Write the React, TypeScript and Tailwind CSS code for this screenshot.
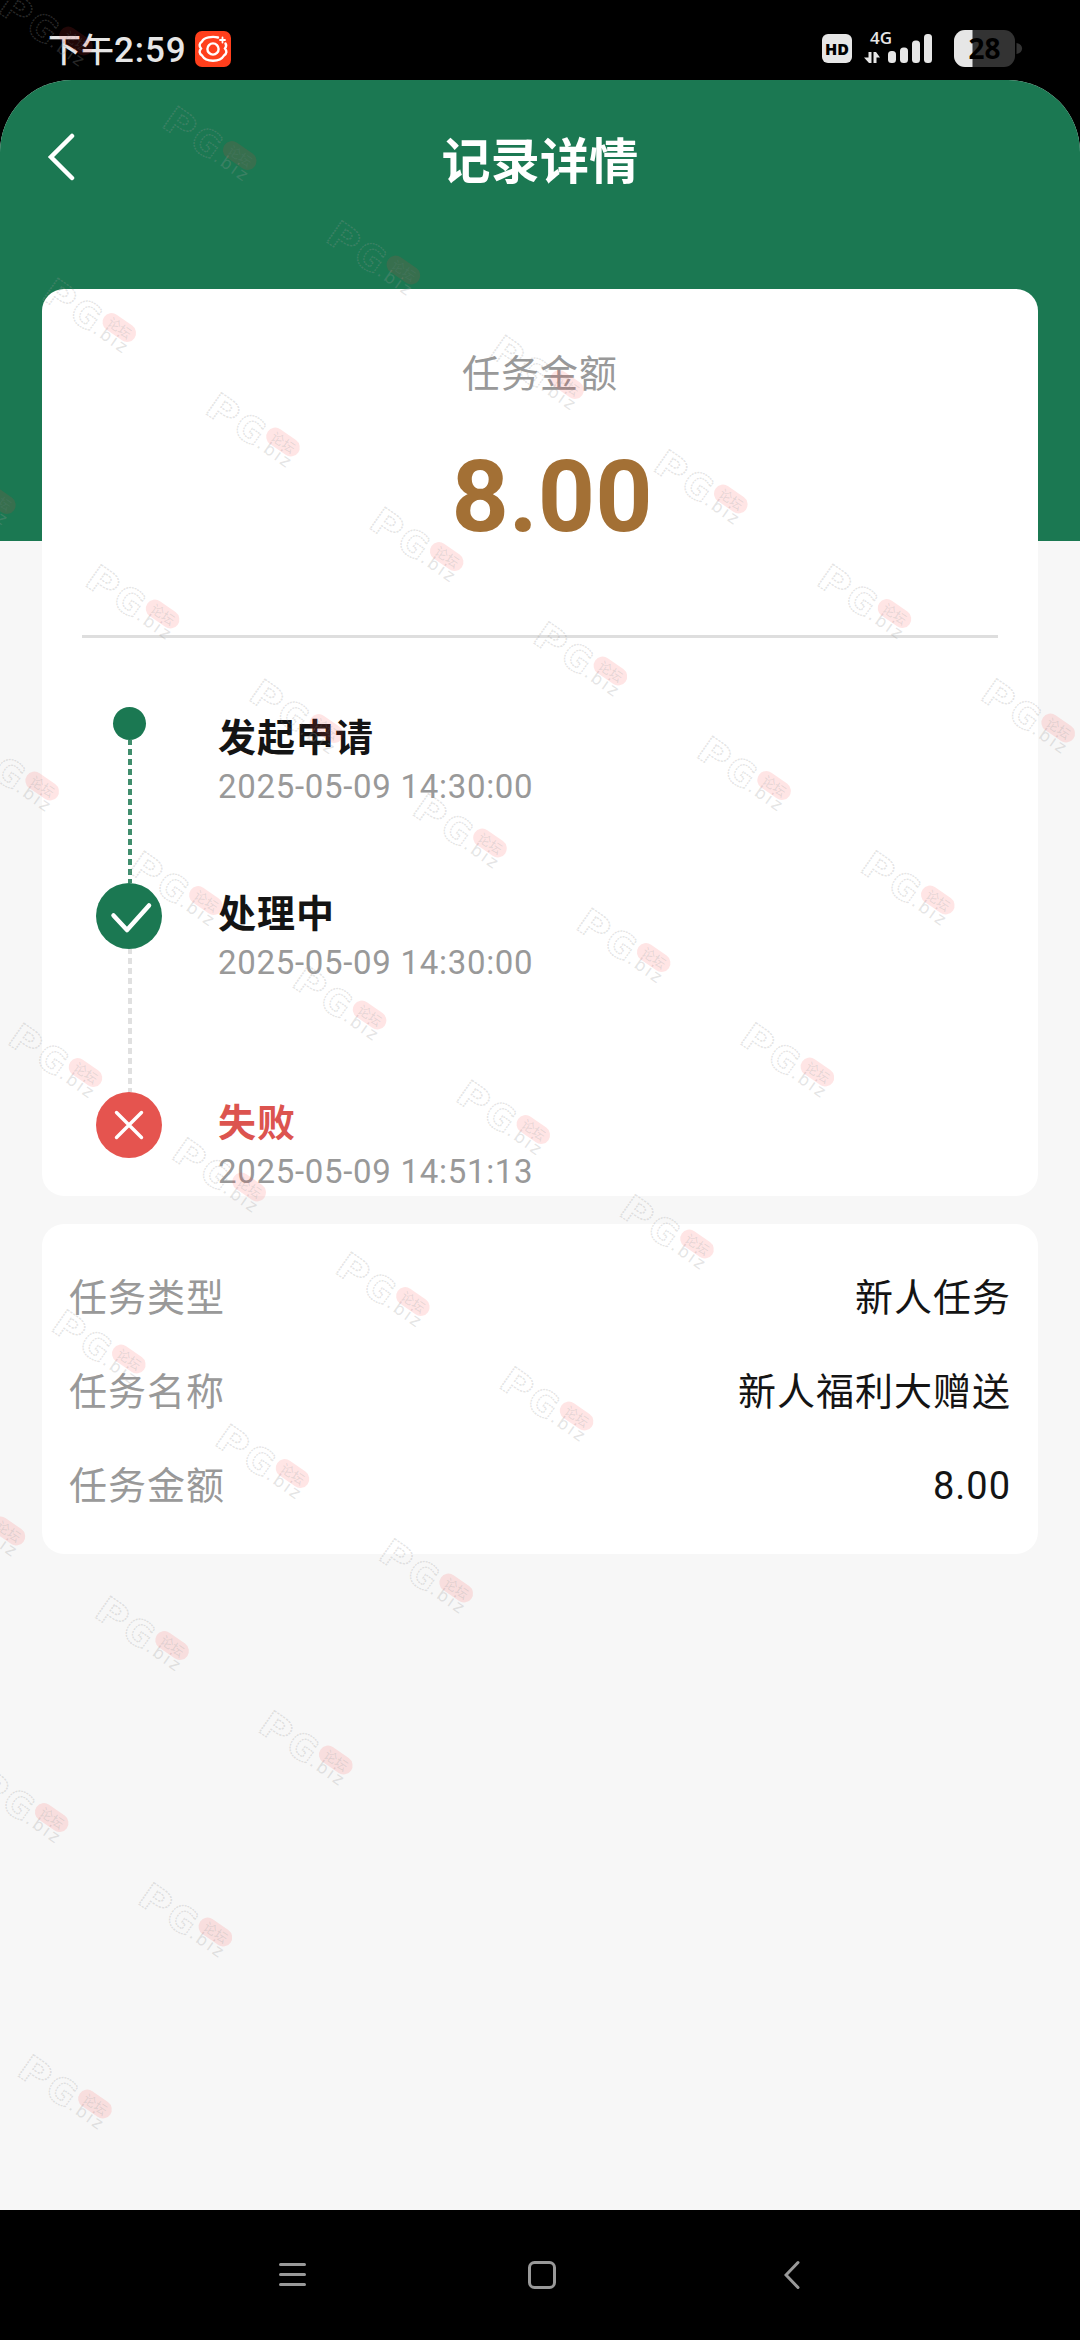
import React from 'react';
import { clsx } from 'clsx';

type StepStatus = 'start' | 'done' | 'failed';

interface Step {
  title: string;
  time: string;
  status: StepStatus;
}

const steps: Step[] = [
  { title: '发起申请', time: '2025-05-09 14:30:00', status: 'start' },
  { title: '处理中', time: '2025-05-09 14:30:00', status: 'done' },
  { title: '失败', time: '2025-05-09 14:51:13', status: 'failed' },
];

const details = [
  { label: '任务类型', value: '新人任务' },
  { label: '任务名称', value: '新人福利大赠送' },
  { label: '任务金额', value: '8.00' },
];

function StatusBar() {
  return (
    <div className="flex h-20 items-center justify-between bg-black pl-12 pr-[58px] pt-[18px] text-[#e6e6e6]">
      <div className="flex items-center gap-2">
        <span className="font-['Noto_Sans_CJK_SC',sans-serif] text-[33px] font-medium leading-9">
          下午<span className="font-['Roboto',sans-serif] text-[35px] tracking-[0.9px]">2:59</span>
        </span>
        <svg className="size-9" viewBox="0 0 36 36" fill="none" stroke="#fff" strokeWidth="2.4" strokeLinecap="round">
          <rect width="36" height="36" rx="7" fill="#ff3f1c" stroke="none" />
          <circle cx="18" cy="18" r="5.6" />
          <path d="M23 6.5C17 5 9 6.5 7 10.5C4 12.5 4 15 6 17.5C4 20 4 22.5 7 24.5C11 31.5 25 31.5 29 24.5C32 22.5 32 20 30 17.5C31.5 15.5 31.5 14 30.5 12.5" />
          <path d="M27.5 6.5V11.5M25 9H30" strokeWidth="1.8" />
        </svg>
      </div>
      <svg className="h-[42px] w-[201px] overflow-visible" viewBox="0 0 201 42" fill="#e6e6e6">
        <rect x="1" y="6" width="30" height="29" rx="6" />
        <text x="4" y="26.5" textLength="24" lengthAdjust="spacingAndGlyphs" fontSize="16.5" fontWeight="800" fill="#000" className="font-['Open_Sans',sans-serif]">HD</text>
        <text x="49" y="15.5" textLength="22" lengthAdjust="spacingAndGlyphs" fontSize="17" fontWeight="600" className="font-['Open_Sans',sans-serif]">4G</text>
        <path d="M47.5 24H50.5V35H48L43 29.5H47.5ZM52.5 24H55L59 29.5H55.5V35H52.5Z" />
        <rect x="67" y="23" width="8" height="12" rx="3.5" />
        <rect x="79" y="19.5" width="8" height="15.5" rx="3.5" />
        <rect x="91" y="12.5" width="8" height="22.5" rx="3.5" />
        <rect x="103" y="6" width="8" height="29" rx="3.5" />
        <rect x="133" y="2" width="61" height="37" rx="11" fill="#333" />
        <path d="M151.5 2V39H144A11 11 0 0 1 133 28V13A11 11 0 0 1 144 2Z" />
        <path d="M195.5 15C203 16 203 25 195.5 26Z" fill="#333" />
        <text x="147.5" y="31" textLength="32" lengthAdjust="spacingAndGlyphs" fontSize="28" fontWeight="700" fill="#000" className="font-['Open_Sans',sans-serif]">28</text>
      </svg>
    </div>
  );
}

function StepIcon({ status }: { status: StepStatus }) {
  if (status === 'start') {
    return <div className="size-[33px] shrink-0 rounded-full bg-[#1b7852]" />;
  }

  return (
    <svg
      className="size-[66px] shrink-0"
      viewBox="0 0 66 66"
      fill="none"
      stroke="#fff"
      strokeLinecap="round"
      strokeLinejoin="round"
    >
      <circle cx="33" cy="33" r="33" stroke="none" fill={status === 'done' ? '#1b7852' : '#e5544f'} />
      {status === 'done' ? (
        <path d="M17.5 32.5L31 47L53 22.5" strokeWidth="4.5" />
      ) : (
        <path d="M20.5 20.5L45.5 45.5M45.5 20.5L20.5 45.5" strokeWidth="3.4" />
      )}
    </svg>
  );
}

function StepRow({ step }: { step: Step }) {
  const { title, time, status } = step;

  return (
    <div
      className={clsx(
        'flex gap-14',
        status === 'start' && 'h-44',
        status === 'done' && 'h-[209px]',
      )}
    >
      <div className="flex w-[66px] flex-col items-center">
        <StepIcon status={status} />
        {status !== 'failed' && (
          <svg className="w-[5px] grow" stroke={status === 'start' ? '#3f8d6c' : '#e0e0e0'} strokeWidth="4">
            <line x1="3" y1="0" x2="3" y2="100%" strokeDasharray="6 4" strokeDashoffset="1" />
          </svg>
        )}
      </div>
      <div className="flex flex-col pt-2">
        <h2
          className={clsx(
            'text-[38px] font-bold leading-[46px] tracking-[1px]',
            status === 'failed' ? 'text-[#dc544f]' : 'text-[#141414]',
          )}
        >
          {title}
        </h2>
        <time className="pt-px text-[33px] leading-[50px] tracking-[0.7px] text-[#999]">{time}</time>
      </div>
    </div>
  );
}

// Rotated stamp, repeated over the whole screen
function Watermark() {
  const stamps: { x: number; y: number }[] = [];
  for (let row = 0; row < 9; row++) {
    for (let col = -1; col < 6; col++) {
      stamps.push({ x: 178 - row * 120.4 + col * 163.7, y: 105 + row * 172 + col * 114.5 });
    }
  }

  return (
    <svg className="pointer-events-none absolute inset-0" width="1080" height="2340" viewBox="0 0 1080 2340">
      <defs>
        <g id="stamp" className="font-['DejaVu_Sans',sans-serif]" fontWeight="700">
          <g fill="#999" fillOpacity="0.02" stroke="#999" strokeOpacity="0.27" strokeWidth="1.4" strokeDasharray="2 1">
            <text x="-3" y="27" fontSize="36" textLength="31" lengthAdjust="spacingAndGlyphs">P</text>
            <text x="31" y="27" fontSize="36" textLength="28" lengthAdjust="spacingAndGlyphs">G</text>
          </g>
          <text x="60" y="25.5" fontSize="17" fontWeight="400" textLength="37" fill="#999" fillOpacity="0.26">.biz</text>
          <rect x="61" y="-3" width="37" height="18" rx="9" fill="#ff3838" fillOpacity="0.13" />
          <text x="67" y="11" fontSize="13" fontWeight="400" fill="#6b8a8a" fillOpacity="0.18" className="font-['Noto_Sans_CJK_SC',sans-serif]">论坛</text>
        </g>
      </defs>
      {stamps.map(({ x, y }) => (
        <use key={`${x}-${y}`} href="#stamp" transform={`translate(${x} ${y}) rotate(35)`} />
      ))}
    </svg>
  );
}

function NavBar() {
  return (
    <div className="flex h-[130px] items-start justify-between bg-black pl-[278px] pr-[280px] pt-[50px]">
      <svg className="h-[30px] w-7" viewBox="0 0 28 30" stroke="#999" strokeWidth="3" strokeLinecap="round">
        <path d="M2.5 4.5H26.5M2.5 14.5H26.5M2.5 24.5H26.5" />
      </svg>
      <svg className="mr-[7px] h-[30px] w-[30px]" viewBox="0 0 30 30" fill="none" stroke="#999" strokeWidth="3">
        <rect x="2.5" y="2.5" width="25" height="25" rx="5" />
      </svg>
      <svg className="h-[30px] w-4" viewBox="0 0 16 30" fill="none" stroke="#999" strokeWidth="3" strokeLinecap="round">
        <path d="M14 2.5L2 15L14 27.5" />
      </svg>
    </div>
  );
}

export default function App() {
  return (
    <div className="relative flex h-[2340px] w-[1080px] flex-col overflow-hidden bg-black font-['Roboto','Noto_Sans_CJK_SC',sans-serif]">
      <StatusBar />
      <div className="flex grow flex-col overflow-hidden rounded-t-[72px] bg-[#f7f7f7]">
        <header className="h-[461px] bg-[#1b7852]">
          <div className="flex h-[154px] items-center pl-[47px] pr-[75px]">
            <svg className="h-12 w-7" viewBox="0 0 28 48" fill="none" stroke="#fff" strokeWidth="4.5" strokeLinecap="round">
              <path d="M25 3L4 24L25 45" />
            </svg>
            <h1 className="grow pt-3 text-center text-[49px] font-bold tracking-[0.3px] text-white">记录详情</h1>
          </div>
        </header>

        <main className="-mt-[252px] flex grow flex-col gap-[28px] px-[42px]">
          <section className="h-[907px] rounded-[22px] bg-white px-10">
            <div className="flex h-[349px] flex-col items-center border-b-[3px] border-[#dedede] pt-[57px]">
              <span className="text-[38px] leading-[56px] tracking-[1px] text-[#999]">任务金额</span>
              <strong className="mt-[36px] pl-6 text-[100px] font-bold leading-[118px] text-[#a37035]">8.00</strong>
            </div>
            <div className="flex flex-col pl-[14px] pt-[69px]">
              {steps.map((step) => (
                <StepRow key={step.title} step={step} />
              ))}
            </div>
          </section>

          <section className="flex h-[330px] flex-col rounded-[22px] bg-white px-[27px] pt-[27px]">
            {details.map(({ label, value }) => (
              <div key={label} className="flex h-[94px] items-center justify-between text-[38px] tracking-[1px]">
                <span className="text-[#999]">{label}</span>
                <span className="text-[#141414]">{value}</span>
              </div>
            ))}
          </section>
        </main>
      </div>
      <NavBar />
      <Watermark />
    </div>
  );
}
